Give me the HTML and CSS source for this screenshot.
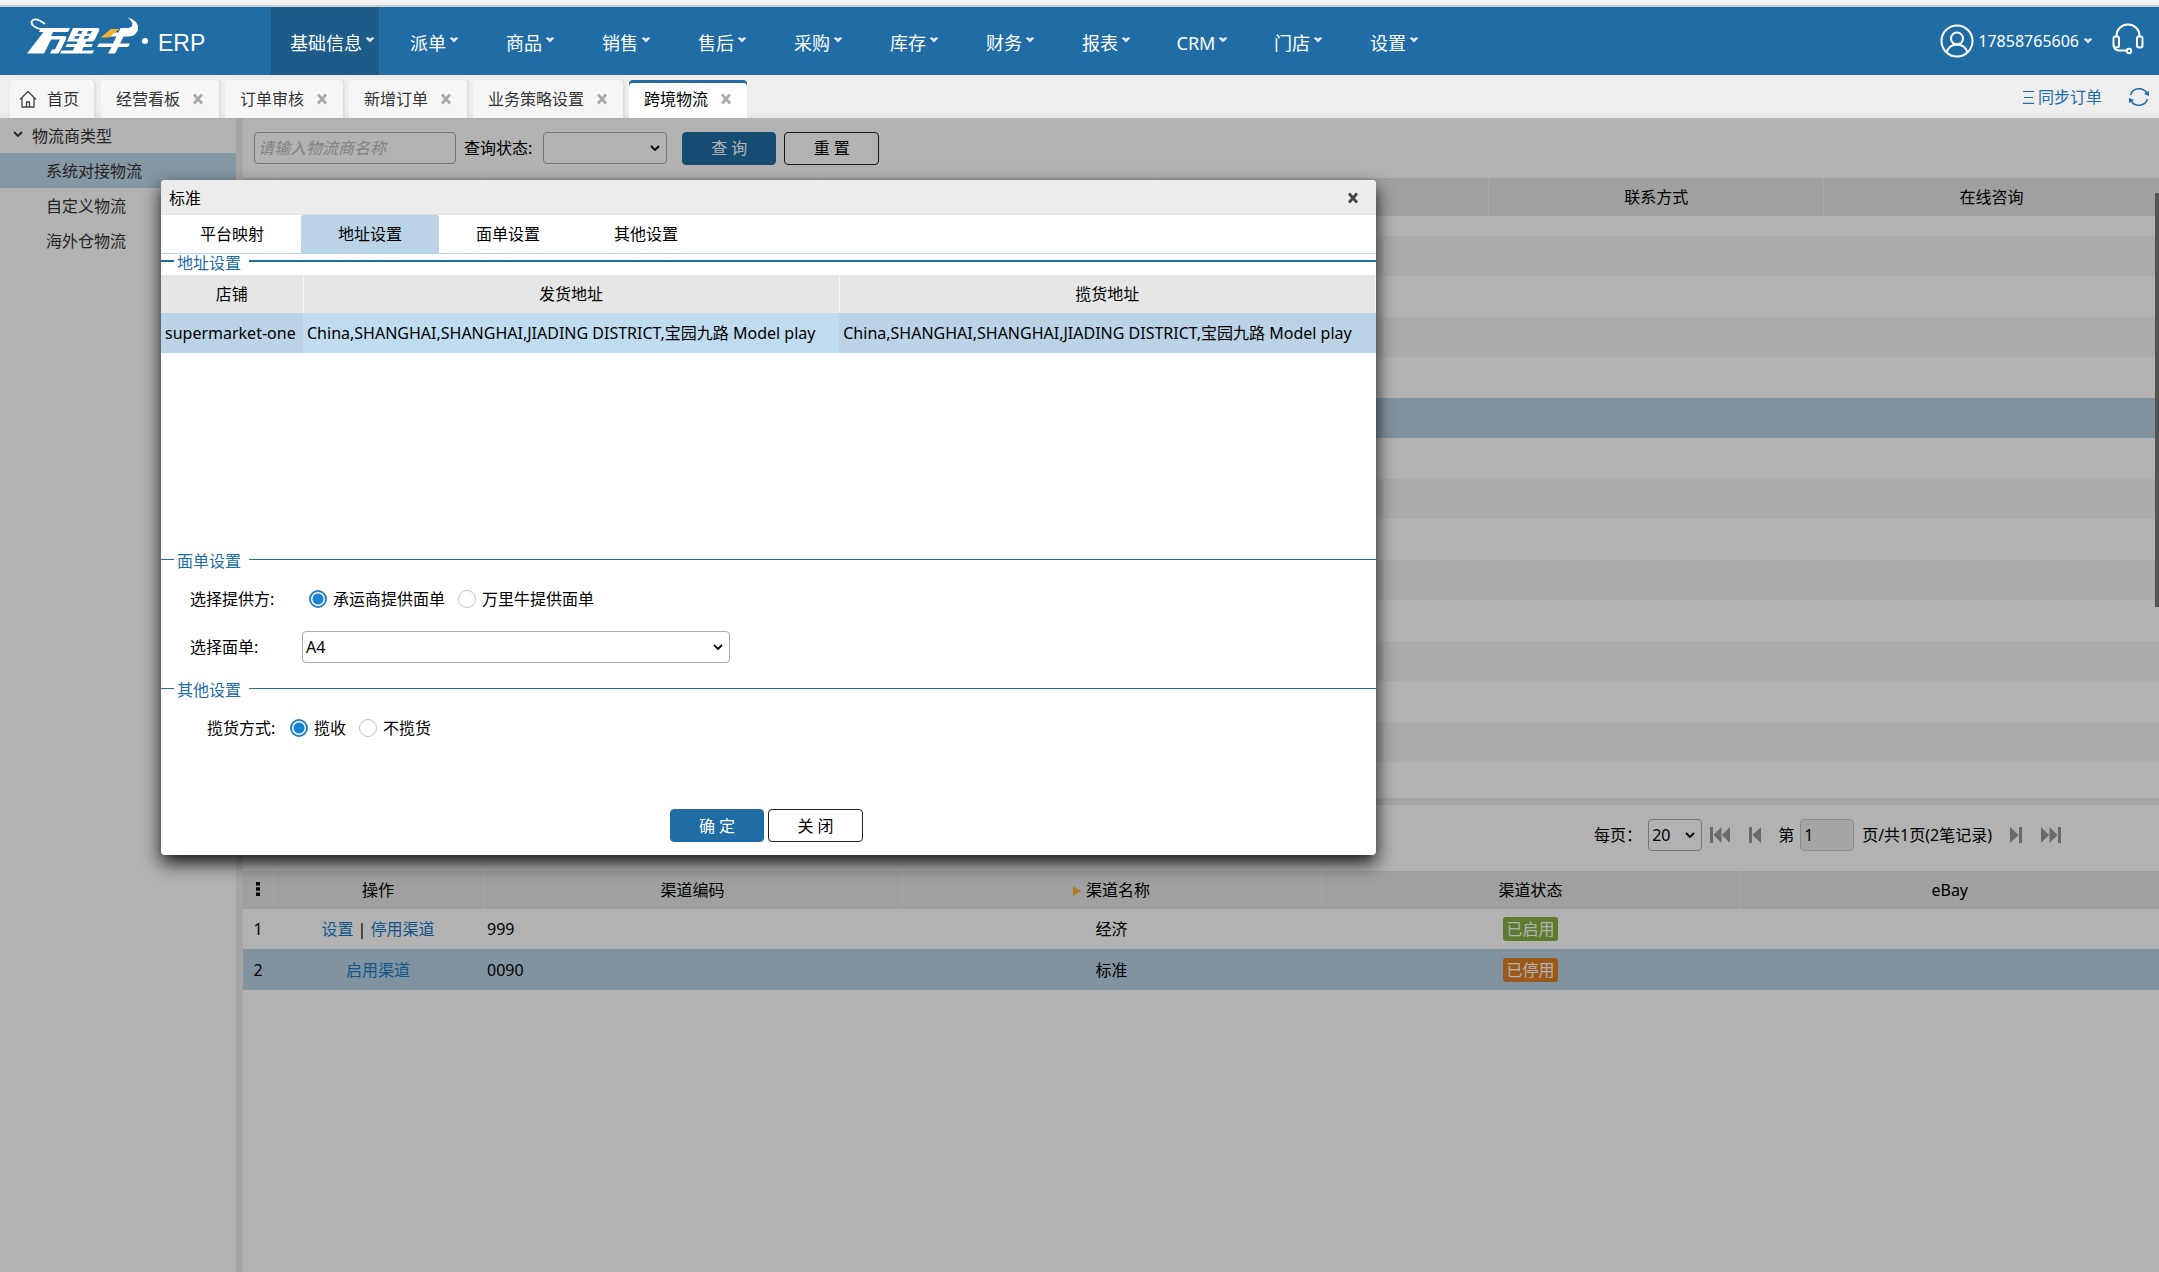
FILE: index.html
```html
<!DOCTYPE html>
<html lang="zh-CN">
<head>
<meta charset="utf-8">
<meta name="viewport" content="width=device-width, initial-scale=1">
<title>万里牛 ERP - 跨境物流</title>
<link rel="stylesheet" href="styles.css">
</head>
<body>
<svg width="0" height="0" class="defs" aria-hidden="true">
  <symbol id="caret" viewBox="0 0 8 6"><path d="M0 .5h2.800L4 1.700 5.200.5H8v1L4 5.500 0 1.500z" fill="currentColor"/></symbol>
  <symbol id="cross" viewBox="0 0 12 12"><path d="M2 1.500l8 9M10 1.500l-8 9" stroke="currentColor" stroke-width="2.800" fill="none"/></symbol>
  <symbol id="chevron" viewBox="0 0 10 6"><path d="M1 1l4 4 4-4" stroke="currentColor" stroke-width="1.800" fill="none"/></symbol>
</svg>

<header class="topbar">
  <a class="brand" href="#" aria-label="万里牛 ERP">
    <svg class="brand-mark" viewBox="0 0 112 40" width="112" height="40" aria-hidden="true">
      <g fill="#fff">
        <path d="M14 11h29l-2 4H26l-2 4h13c2 0 3 1 2 3l-6 12c-1 2-2 2.500-4 2.500h-6l2-4h3l5-10h-9l-7 14H0l16.500-21.500H12z"/>
        <path fill-rule="evenodd" d="M46 11h24c2 0 3 1 2 3l-4 8c-1 2-2 2.500-4 2.500h-5l-1 2.500h8l-1.500 3h-8l-1.500 3.500h12l-1.500 3H33l1.500-3H46l1.500-3.500h-9L40 27h9.500l1-2.500H40l6-13.500zM51.500 14l-1.300 2.800h4l1.300-2.800zm9.500 0l-1.300 2.800h4l1.300-2.800zM48.500 19l-1.300 2.800h4.300l1.300-2.800zm9.500 0l-1.300 2.800h4.300l1.300-2.800z"/>
        <path d="M85 11h16c6-1 6-6-.5-10.500 9 2 13 9 9 15-2 3-5 4-9 4h-4l-3.500 7H103l-2 3.500h-9.500l-3.500 6.500h-7l3.500-6.500H70l2-3.500h14l3.500-7h-7l2-4h7l2-4.500z"/>
      </g>
      <path d="M84 12h8.500L82 20.500h-8.500z" fill="#f0b428"/>
      <path d="M16 12C8 12 3 7 5 4c3-4 9 0 13 3" fill="none" stroke="#fff" stroke-width="1.800"/>
    </svg>
    <span class="brand-dot"></span>
    <span class="brand-name">ERP</span>
  </a>
  <nav class="nav" aria-label="主导航">
    <a class="nav-item active" href="#">基础信息<svg class="caret"><use href="#caret"/></svg></a>
    <a class="nav-item" href="#">派单<svg class="caret"><use href="#caret"/></svg></a>
    <a class="nav-item" href="#">商品<svg class="caret"><use href="#caret"/></svg></a>
    <a class="nav-item" href="#">销售<svg class="caret"><use href="#caret"/></svg></a>
    <a class="nav-item" href="#">售后<svg class="caret"><use href="#caret"/></svg></a>
    <a class="nav-item" href="#">采购<svg class="caret"><use href="#caret"/></svg></a>
    <a class="nav-item" href="#">库存<svg class="caret"><use href="#caret"/></svg></a>
    <a class="nav-item" href="#">财务<svg class="caret"><use href="#caret"/></svg></a>
    <a class="nav-item" href="#">报表<svg class="caret"><use href="#caret"/></svg></a>
    <a class="nav-item" href="#">CRM<svg class="caret"><use href="#caret"/></svg></a>
    <a class="nav-item" href="#">门店<svg class="caret"><use href="#caret"/></svg></a>
    <a class="nav-item" href="#">设置<svg class="caret"><use href="#caret"/></svg></a>
  </nav>
  <div class="account">
    <button class="user" type="button">
      <svg class="avatar" viewBox="0 0 34 34" width="34" height="34" fill="none" stroke="#fff" stroke-width="2" aria-hidden="true"><circle cx="17" cy="17" r="15.500"/><circle cx="17" cy="14.500" r="6"/><path d="M6.500 28c2-5 6-7.500 10.500-7.500S25.500 23 27.500 28"/></svg>
      <span>17858765606</span><svg class="caret"><use href="#caret"/></svg>
    </button>
    <button class="support" type="button" aria-label="客服">
      <svg viewBox="0 0 32 32" width="32" height="32" fill="none" stroke="#fff" stroke-width="2" aria-hidden="true"><path d="M4.500 14V12.500a11.500 11 0 0 1 23 0V14"/><rect x="1.500" y="13.500" width="5.500" height="11" rx="2"/><rect x="25" y="13.500" width="5.500" height="11" rx="2"/><path d="M2 22c0 4 2 5.500 5 5.500h7.500"/><circle cx="17" cy="28" r="2.200"/></svg>
    </button>
  </div>
</header>

<div class="tabbar">
  <div class="tabs">
    <a class="tab home" href="#"><svg viewBox="0 0 18 18" width="18" height="18" fill="none" stroke="#444" stroke-width="1.300" aria-hidden="true"><path d="M1 9.500L9 1.500l8 8M3 8v9h12V8M7.500 17v-5h3v5"/></svg>首页</a>
    <div class="tab"><a href="#">经营看板</a><button type="button" aria-label="关闭经营看板"><svg><use href="#cross"/></svg></button></div>
    <div class="tab"><a href="#">订单审核</a><button type="button" aria-label="关闭订单审核"><svg><use href="#cross"/></svg></button></div>
    <div class="tab"><a href="#">新增订单</a><button type="button" aria-label="关闭新增订单"><svg><use href="#cross"/></svg></button></div>
    <div class="tab"><a href="#">业务策略设置</a><button type="button" aria-label="关闭业务策略设置"><svg><use href="#cross"/></svg></button></div>
    <div class="tab current"><a href="#">跨境物流</a><button type="button" aria-label="关闭跨境物流"><svg><use href="#cross"/></svg></button></div>
  </div>
  <div class="tab-tools">
    <a class="sync" href="#"><svg viewBox="0 0 12 14" width="12" height="14" stroke="currentColor" stroke-width="1.200" aria-hidden="true"><path d="M0 1.500h11M1 7.500h9M0 13.400h11"/></svg>同步订单</a>
    <button class="refresh" type="button" aria-label="刷新">
      <svg viewBox="0 0 22 20" width="22" height="20" fill="none" stroke="currentColor" stroke-width="1.500" aria-hidden="true"><path d="M2.500 8A9 8.800 0 0 1 18.800 6M19.500 12A9 8.800 0 0 1 3.200 14"/><path d="M21 4v5l-5-2zM1 16v-5l5 2z" fill="currentColor" stroke="none"/></svg>
    </button>
  </div>
</div>

<div class="workspace">
  <aside class="sidebar">
    <ul class="tree">
      <li class="tree-root"><svg class="chevron"><use href="#chevron"/></svg>物流商类型</li>
      <li class="selected"><a href="#">系统对接物流</a></li>
      <li><a href="#">自定义物流</a></li>
      <li><a href="#">海外仓物流</a></li>
    </ul>
  </aside>

  <main class="content">
    <form class="query">
      <input class="field" type="text" placeholder="请输入物流商名称" aria-label="物流商名称">
      <label for="status">查询状态:</label>
      <span class="select status"><select id="status"><option></option></select><svg class="chevron"><use href="#chevron"/></svg></span>
      <button class="btn primary" type="button">查 询</button>
      <button class="btn" type="button">重 置</button>
    </form>

    <div class="carriers">
      <table class="grid">
        <colgroup><col class="c-index"><col class="c-action"><col><col><col><col><col></colgroup>
        <thead><tr><th></th><th></th><th></th><th></th><th></th><th>联系方式</th><th>在线咨询</th></tr></thead>
      </table>
      <div class="rows">
        <div class="row first"></div>
        <div class="row"></div><div class="row"></div><div class="row"></div><div class="row"></div>
        <div class="row picked"></div>
        <div class="row"></div><div class="row"></div><div class="row"></div><div class="row"></div>
        <div class="row"></div><div class="row"></div><div class="row"></div><div class="row"></div>
        <div class="row last"></div>
      </div>
      <span class="scrollbar"></span>
    </div>

    <div class="pager">
      <label for="size">每页：</label>
      <span class="select size"><select id="size"><option>20</option></select><svg class="chevron"><use href="#chevron"/></svg></span>
      <button class="go" type="button" aria-label="首页"><svg viewBox="0 0 20 16" width="20" height="16"><path d="M0 0h3v16H0zM11.500 0v16L3.500 8zM20 0v16l-8-8z"/></svg></button>
      <button class="go prev" type="button" aria-label="上一页"><svg viewBox="0 0 12 16" width="12" height="16"><path d="M0 0h3v16H0zM12 0v16L3.500 8z"/></svg></button>
      <label for="page">第</label>
      <input class="page" id="page" type="text" value="1">
      <span class="total">页/共1页(2笔记录)</span>
      <button class="go" type="button" aria-label="下一页"><svg viewBox="0 0 12 16" width="12" height="16"><path d="M9 0h3v16H9zM0 0v16l8.500-8z"/></svg></button>
      <button class="go" type="button" aria-label="末页"><svg viewBox="0 0 20 16" width="20" height="16"><path d="M17 0h3v16h-3zM8.500 0v16l8-8zM0 0v16l8-8z"/></svg></button>
    </div>

    <table class="grid channels">
      <colgroup><col class="c-index"><col class="c-action"><col><col><col><col></colgroup>
      <thead>
        <tr><th><svg viewBox="0 0 4 14" width="4" height="14" aria-hidden="true"><path d="M0 0h4v3.500H0zM0 5.200h4v3.500H0zM0 10.500h4V14H0z"/></svg></th><th>操作</th><th>渠道编码</th><th><svg class="sort" viewBox="0 0 8 10" width="8" height="10" aria-hidden="true"><path d="M0 0l8 5-8 5z" fill="#f9b233"/></svg>渠道名称</th><th>渠道状态</th><th>eBay</th></tr>
      </thead>
      <tbody>
        <tr><td>1</td><td><a href="#">设置</a> | <a href="#">停用渠道</a></td><td class="code">999</td><td>经济</td><td><span class="badge on">已启用</span></td><td></td></tr>
        <tr class="picked"><td>2</td><td><a href="#">启用渠道</a></td><td class="code">0090</td><td>标准</td><td><span class="badge off">已停用</span></td><td></td></tr>
      </tbody>
    </table>
  </main>

  <div class="mask"></div>

  <section class="dialog" role="dialog" aria-labelledby="dialog-title">
    <header class="dialog-head">
      <h2 id="dialog-title">标准</h2>
      <button type="button" aria-label="关闭"><svg><use href="#cross"/></svg></button>
    </header>
    <nav class="dialog-tabs">
      <a href="#">平台映射</a><a class="current" href="#">地址设置</a><a href="#">面单设置</a><a href="#">其他设置</a>
    </nav>
    <form class="dialog-body">
      <fieldset class="group address">
        <legend>地址设置</legend>
        <table class="address-table">
          <colgroup><col class="c-shop"><col><col></colgroup>
          <thead><tr><th>店铺</th><th>发货地址</th><th>揽货地址</th></tr></thead>
          <tbody><tr><td>supermarket-one</td><td class="focus">China,SHANGHAI,SHANGHAI,JIADING DISTRICT,宝园九路 Model play</td><td>China,SHANGHAI,SHANGHAI,JIADING DISTRICT,宝园九路 Model play</td></tr></tbody>
        </table>
      </fieldset>
      <fieldset class="group waybill">
        <legend>面单设置</legend>
        <div class="line">
          <span class="caption">选择提供方:</span>
          <label class="radio"><input type="radio" name="provider" checked>承运商提供面单</label>
          <label class="radio"><input type="radio" name="provider">万里牛提供面单</label>
        </div>
        <div class="line template">
          <label class="caption" for="template">选择面单:</label>
          <span class="select"><select id="template"><option>A4</option></select><svg class="chevron"><use href="#chevron"/></svg></span>
        </div>
      </fieldset>
      <fieldset class="group other">
        <legend>其他设置</legend>
        <div class="line">
          <span class="caption">揽货方式:</span>
          <label class="radio"><input type="radio" name="pickup" checked>揽收</label>
          <label class="radio"><input type="radio" name="pickup">不揽货</label>
        </div>
      </fieldset>
      <footer class="dialog-foot">
        <button class="btn primary" type="button">确 定</button>
        <button class="btn" type="button">关 闭</button>
      </footer>
    </form>
  </section>
</div>
</body>
</html>
```
FILE: styles.css
```css
:root {
  --blue: #206da5;
  --pick: #bad3e6;
  --head: #e5e5e5;
}
* { box-sizing: border-box; }
html, body { height: 100%; }
body {
  margin: 0;
  display: flex;
  flex-direction: column;
  font: 16px/24px "Noto Sans", "Noto Sans CJK SC", sans-serif;
  color: #000;
  background: #fff;
}
a { color: inherit; text-decoration: none; }
button, input, select { font: inherit; color: inherit; margin: 0; }
button { border: 0; background: none; padding: 0; cursor: pointer; }
svg { display: block; flex: none; }
.defs { position: absolute; }
.caret { width: 8px; height: 6px; }
.chevron { width: 10px; height: 6px; }

/* top bar */
.topbar {
  display: flex;
  height: 75px;
  flex: none;
  background: var(--blue);
  border-top: 5px solid #f2f2f2;
  box-shadow: inset 0 2px #c9cdd0;
  padding-top: 2px;
  color: #fff;
}
.brand { display: flex; align-items: center; width: 271px; padding-left: 27px; }
.brand-mark { margin-bottom: 8px; }
.brand-dot { width: 6px; height: 6px; border-radius: 50%; background: #fff; margin-left: 3px; margin-right: 10px; }
.brand-name { font: 23px/24px "Liberation Sans", Arial, sans-serif; padding-top: 3px; }
.nav { display: flex; font-size: 18px; }
.nav-item {
  display: flex;
  align-items: center;
  justify-content: center;
  gap: 4px;
  min-width: 96px;
  padding: 4px 5px 0 19px;
}
.nav-item .caret { margin-bottom: 6px; opacity: .85; }
.nav-item.active { background: #1d5b88; }
.account { display: flex; align-items: center; margin-left: auto; padding-right: 15px; gap: 20px; }
.user { display: flex; align-items: center; gap: 4px; }
.user .caret { margin-left: 1px; opacity: .85; }
.support { margin-bottom: 4px; }

/* page tabs */
.tabbar {
  display: flex;
  flex: none;
  height: 43px;
  padding: 5px 9px 0 10px;
  background: linear-gradient(#eee 80%, #e6e6e6);
}
.tabs { display: flex; gap: 6px; }
.tab {
  display: flex;
  align-items: center;
  gap: 12px;
  height: 38px;
  padding: 0 15px;
  background: #f6f6f6;
  border-radius: 4px 4px 0 0;
  box-shadow: 2px 0 2px #ddd;
  color: #333;
}
.tab.home { gap: 10px; padding-left: 9px; margin-right: 1px; }
.tab button svg { width: 12px; height: 12px; color: #aaa; }
.tab.current { background: #fff; color: #000; box-shadow: inset 0 3px var(--blue); }
.tab-tools { display: flex; align-items: center; gap: 26px; margin-left: auto; padding-bottom: 4px; color: var(--blue); }
.sync { display: flex; align-items: center; gap: 3px; }

/* workspace */
.workspace { position: relative; flex: 1; display: flex; min-height: 760px; }
.mask { position: absolute; inset: 0; background: rgba(0, 0, 0, .3); }
.sidebar { width: 243px; flex: none; border-right: 7px solid #ededed; }
.tree { list-style: none; margin: 0; padding: 0; color: #333; line-height: 37px; }
.tree li { height: 35px; padding-left: 46px; }
.tree .tree-root { display: flex; gap: 9px; padding-left: 13px; }
.tree-root .chevron { margin-top: 13px; }
.tree .selected { background: #bfd8ea; }

.content { flex: 1; min-width: 0; display: flex; flex-direction: column; }
.query { display: flex; align-items: center; height: 60px; padding-left: 11px; }
.field, .select select, .page {
  height: 32px;
  border: 1px solid #aaa;
  border-radius: 4px;
  background: #fff;
  padding: 0 3px;
}
.field { width: 202px; }
.field::placeholder { font-style: italic; color: #bbb; }
.query label { margin: 0 11px 0 8px; }
.select { position: relative; display: inline-block; }
.select select { display: block; width: 100%; appearance: none; }
.select .chevron { position: absolute; right: 7px; top: 13px; pointer-events: none; }
.status { width: 124px; }
.btn {
  width: 95px;
  height: 33px;
  border: 1px solid #222;
  border-radius: 4px;
  background: #fff;
  color: #000;
}
.btn.primary { background: var(--blue); border-color: var(--blue); color: #fff; width: 94px; }
.query .btn { margin-left: 8px; }
.query .btn.primary { margin-left: 15px; }

.grid { width: 100%; table-layout: fixed; border-collapse: collapse; text-align: center; }
.grid th { height: 38px; padding: 0; font-weight: 400; background: var(--head); border-right: 1px solid #f0f0f0; }
.grid th:last-child { border-right: 0; }
.grid th svg { display: inline-block; }
.c-index { width: 30px; }
.c-action { width: 210px; }
.carriers { position: relative; border-bottom: 7px solid #ededed; }
.row { height: 41px; background: #fff; }
.row:nth-child(even) { height: 40px; background: #f5f5f5; }
.row.first { height: 20px; }
.row.last { height: 36px; }
.carriers .row.picked { background: var(--pick); }
.scrollbar { position: absolute; right: 0; top: 15px; width: 4px; height: 414px; background: #797979; }

.pager { display: flex; align-items: center; height: 66px; padding: 0 98px 6px 0; justify-content: flex-end; }
.select.size { width: 54px; margin: 0 8px 0 6px; }
.go svg { fill: #999; }
.go.prev { margin: 0 17px 0 19px; }
.page { width: 54px; margin: 0 8px 0 6px; background: #ededed; border-color: #ccc; }
.total + .go { margin: 0 19px 0 18px; }

.channels td { height: 40px; padding: 0; }
.channels a { color: #1b7cc4; }
.channels .code { text-align: left; padding-left: 4px; }
.channels .picked { background: var(--pick); }
.channels .picked td { height: 41px; }
.channels .sort { margin-right: 5px; }
.badge { display: inline-block; padding: 0 3px; border-radius: 3px; color: #fff; }
.badge.on { background: #84b043; }
.badge.off { background: #df7e28; }

/* dialog */
.dialog {
  position: absolute;
  left: 161px;
  top: 62px;
  width: 1215px;
  max-width: calc(100% - 161px);
  background: #fff;
  border-radius: 4px;
  box-shadow: 0 8px 18px rgba(0, 0, 0, .88);
}
.dialog-head {
  display: flex;
  align-items: center;
  justify-content: space-between;
  height: 35px;
  padding: 2px 17px 0 8px;
  background: #ececec;
  border-bottom: 1px solid #e0e0e0;
  border-radius: 4px 4px 0 0;
}
.dialog-head h2 { margin: 0; font: inherit; }
.dialog-head svg { width: 12px; height: 12px; color: #444; }
.dialog-tabs { display: flex; height: 39px; padding-left: 2px; border-bottom: 1px solid var(--pick); line-height: 38px; text-align: center; }
.dialog-tabs a { width: 138px; }
.dialog-tabs .current { background: var(--pick); border-radius: 3px 3px 0 0; }
.group { min-width: 0; margin: 0; padding: 0; border: 0; border-top: 1px solid var(--blue); }
.group legend { margin-left: 13px; padding: 4px 8px 0 3px; color: var(--blue); line-height: 10px; }
.group.address { border-top-width: 2px; padding-top: 7px; height: 298px; }
.address-table { width: 100%; table-layout: fixed; border-collapse: collapse; }
.c-shop { width: 142px; }
.address-table th { height: 38px; padding: 0; font-weight: 400; background: #e6e6e6; border-right: 1px solid #f4f4f4; }
.address-table td { height: 40px; padding: 0 0 0 4px; background: var(--pick); white-space: nowrap; overflow: hidden; }
.address-table .focus { background: #c0dcf0; }
.line { display: flex; align-items: center; height: 32px; padding-left: 29px; }
.caption { width: 112px; }
.radio { display: flex; align-items: center; gap: 6px; margin-right: 13px; }
.radio input {
  appearance: none;
  width: 18px;
  height: 18px;
  border: 1px solid #c4c4c4;
  border-radius: 50%;
  background: #fff;
}
.radio input:checked { border: 2px solid #2a80c4; background: radial-gradient(circle, #1b84d2 5px, #fff 6px); }
.waybill { height: 129px; }
.waybill .line:first-of-type { margin-top: 17px; }
.waybill .line .caption + .radio { margin-left: 7px; }
.template { margin-top: 16px; }
.template .select { width: 428px; }
.other .line { padding-left: 46px; margin-top: 17px; }
.other .caption { width: 83px; }
.dialog-foot { display: flex; gap: 4px; padding: 65px 0 13px 509px; }
```
